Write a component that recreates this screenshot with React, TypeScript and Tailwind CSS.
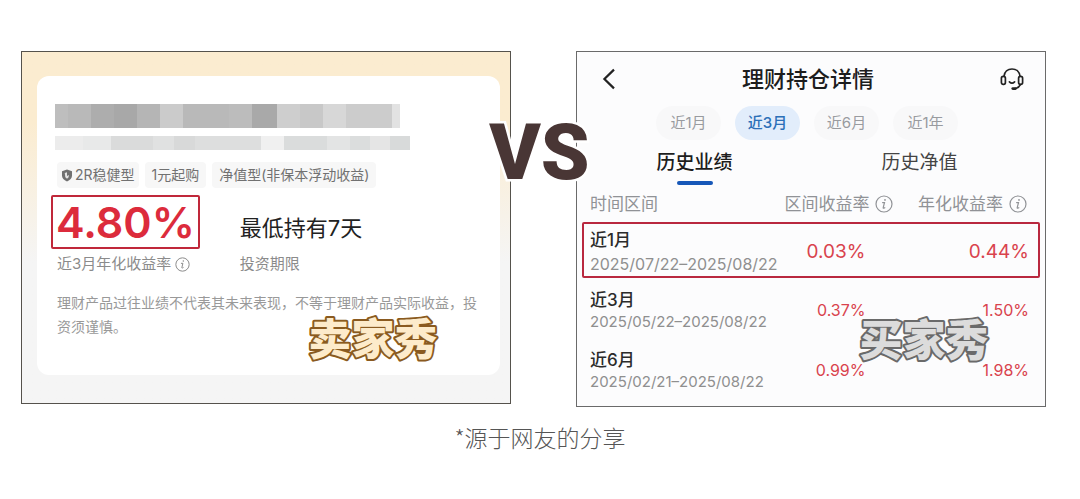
import clsx from 'clsx';

type IconProps = { className?: string };

const InfoIcon = ({ className }: IconProps) => (
  <svg viewBox="0 0 18 18" fill="none" stroke="currentColor" className={className} aria-hidden="true">
    <circle cx="9" cy="9" r="8" strokeWidth="1.2" />
    <path d="M7.6 7.6h1.9l-1.3 5.1q-.1.7.6.5l1-.5" strokeWidth="1.2" strokeLinecap="round" />
    <circle cx="10" cy="4.9" r="0.9" fill="currentColor" stroke="none" />
  </svg>
);

const ShieldIcon = ({ className }: IconProps) => (
  <svg viewBox="0 0 12 14" className={className} aria-hidden="true">
    <path d="M6 0.6 11.4 2.4V7.4Q11.2 11.4 6 13.4 0.8 11.4 0.6 7.4V2.4Z" fill="currentColor" />
    <path d="M3.6 4.2 6 3.4V7.6L8.2 6.4 7.6 9.2 6 10.4 4.2 9Z" fill="#e4e4e4" />
  </svg>
);

const BackIcon = ({ className }: IconProps) => (
  <svg viewBox="0 0 14 22" fill="none" stroke="currentColor" strokeWidth="2.2" className={className} aria-hidden="true">
    <path d="M12 1.6 2.4 11 12 20.4" />
  </svg>
);

const HeadsetIcon = ({ className }: IconProps) => (
  <svg viewBox="0 0 24 24" fill="none" stroke="currentColor" strokeWidth="1.7" strokeLinecap="round" className={className} aria-hidden="true">
    <path d="M4 9.4C4.4 4.8 7.8 2 12 2s7.6 2.8 8 7.4" />
    <rect x="1.4" y="9.4" width="4" height="8" rx="1.8" />
    <rect x="18.6" y="9.4" width="4" height="8" rx="1.8" />
    <path d="M9.4 14.8q2.6 2.6 5.2 0" />
    <path d="M20.4 17.6q-1.6 3.4-5.4 4" />
    <path d="M12.8 21.6h2.6" strokeWidth="2.8" />
  </svg>
);

const Sticker = ({ text, className }: { text: string; className: string }) => (
  <svg viewBox="0 0 136 72" className={clsx('absolute h-[72px] w-[136px]', className)} role="img" aria-label={text}>
    <text
      x="68"
      y="52"
      textAnchor="middle"
      strokeWidth="4"
      strokeLinejoin="round"
      className="font-['Noto_Sans_CJK_SC',sans-serif] text-[43px] font-black [paint-order:stroke_fill]"
    >
      {text}
    </text>
  </svg>
);

const nameBlocks = [
  'grow-[13] bg-[#bebebe]',
  'grow-[23] bg-[#b9b9b9]',
  'grow-[23] bg-[#adadad]',
  'grow-[23] bg-[#a8a8a8]',
  'grow-[23] bg-[#b5b5b5]',
  'grow-[23] bg-[#cbcbcb]',
  'grow-[46] bg-[#b9b9b9]',
  'grow-[23] bg-[#bcbcbc]',
  'grow-[25] bg-[#a9a9a9]',
  'grow-[23] bg-[#cecece]',
  'grow-[23] bg-[#c8c8c8]',
  'grow-[23] bg-[#d7d7d7]',
  'grow-[46] bg-[#cccccc]',
  'grow-[8] bg-[#e2e2e2]',
];

const descBlocks = [
  'grow-[28] bg-[#ececec]',
  'grow-[28] bg-[#e8e9e9]',
  'grow-[42] bg-[#dadbdb]',
  'grow-[21] bg-[#e0e1e1]',
  'grow-[21] bg-[#d8d9d9]',
  'grow-[66] bg-[#dddede]',
  'grow-[23] bg-[#f0f0f0]',
  'grow-[43] bg-[#dadcdc]',
  'grow-[23] bg-[#e3e4e4]',
  'grow-[20] bg-[#dbdddd]',
  'grow-[20] bg-[#e5e5e5]',
  'grow-[20] bg-[#d8dada]',
];

const periods = ['近1月', '近3月', '近6月', '近1年'];

const rows = [
  { label: '近1月', range: '2025/07/22–2025/08/22', gain: '0.03%', annual: '0.44%', marked: true },
  { label: '近3月', range: '2025/05/22–2025/08/22', gain: '0.37%', annual: '1.50%', marked: false },
  { label: '近6月', range: '2025/02/21–2025/08/22', gain: '0.99%', annual: '1.98%', marked: false },
];

const SellerCard = () => (
  <section className="relative self-start border border-[#55524c] bg-linear-to-b from-[#fbecd0] from-20% to-[#f5f5f5] to-60% pt-6 pr-[10px] pb-7 pl-[15px]">
    <div className="rounded-xl bg-white px-4 pt-7 pb-9">
      <div className="ml-[2px] flex h-6 w-4/5 max-w-[346px]">
        {nameBlocks.map((block, i) => (
          <span key={i} className={block} />
        ))}
      </div>
      <div className="mt-2 ml-[2px] flex h-[14px] w-5/6 max-w-[355px]">
        {descBlocks.map((block, i) => (
          <span key={i} className={block} />
        ))}
      </div>

      <div className="pl-1">
        <ul className="mt-3 flex gap-[6px] text-sm leading-[26px] whitespace-nowrap text-[#717171]">
          <li className="flex items-center gap-[2px] rounded-sm bg-[#f7f7f7] px-1">
            <ShieldIcon className="h-[13px] w-3" />
            2R稳健型
          </li>
          <li className="rounded-sm bg-[#f7f7f7] px-[7px]">1元起购</li>
          <li className="rounded-sm bg-[#f7f7f7] px-[7px]">净值型(非保本浮动收益)</li>
        </ul>

        <dl className="mt-[7px] flex gap-10">
          <div className="flex flex-col-reverse">
            <dt className="flex items-center gap-1 text-[15px] leading-[30px] text-[#8b8b8b]">
              近3月年化收益率
              <InfoIcon className="size-[15px]" />
            </dt>
            <dd className="-ml-[6px] flex h-[54px] items-center self-start rounded-xs border-2 border-[#c0283a] px-[3px] text-[43px] font-semibold text-[#dc2b3c]">
              4.80%
            </dd>
          </div>
          <div className="flex flex-col-reverse">
            <dt className="text-[15px] leading-[30px] text-[#8b8b8b]">投资期限</dt>
            <dd className="flex h-[54px] items-center pt-3 text-[22px] text-[#222]">最低持有7天</dd>
          </div>
        </dl>

        <p className="mt-3 text-sm leading-6 text-[#999]">
          理财产品过往业绩不代表其未来表现，不等于理财产品实际收益，投资须谨慎。
        </p>
      </div>
    </div>
    <Sticker text="卖家秀" className="right-[69px] bottom-[28px] fill-[#fdebcb] stroke-[#8a5a20]" />
  </section>
);

const BuyerCard = () => (
  <section className="relative self-start border border-[#6a6a6a] bg-[#fcfcfd] px-[5px] pt-3 pb-2">
    <header className="flex items-center justify-between pr-4 pl-5">
      <button type="button" aria-label="返回" className="text-[#222]">
        <BackIcon className="h-[22px] w-[14px]" />
      </button>
      <h1 className="text-[22px] leading-[30px] font-medium text-[#1d1d1d]">理财持仓详情</h1>
      <button type="button" aria-label="客服" className="text-[#222]">
        <HeadsetIcon className="size-6" />
      </button>
    </header>

    <div className="mt-3 flex justify-center gap-[14px] pr-2 text-[15px] text-[#999b9f]">
      {periods.map((period) => (
        <button
          key={period}
          type="button"
          className={clsx(
            'h-[34px] w-[65px] rounded-full',
            period === '近3月' ? 'bg-[#e2edfb] font-medium text-[#2c70b8]' : 'bg-[#f8f8f9]',
          )}
        >
          {period}
        </button>
      ))}
    </div>

    <div className="mt-2 grid grid-cols-2 pr-2 text-[19px] leading-[30px]">
      <button type="button" className="flex flex-col items-center font-medium text-[#1d1d1d]">
        历史业绩
        <span className="mt-[3px] h-1 w-9 rounded-full bg-[#1657b8]" />
      </button>
      <button type="button" className="flex flex-col items-center text-[#444]">
        历史净值
      </button>
    </div>

    <table className="w-full border-collapse text-left">
      <thead className="text-[17px] leading-[30px] text-[#909296]">
        <tr className="h-[37px]">
          <th className="pl-2 font-normal">时间区间</th>
          <th className="font-normal">
            <span className="flex items-center justify-end gap-[6px]">
              区间收益率
              <InfoIcon className="size-[18px]" />
            </span>
          </th>
          <th className="w-[32%] pr-[13px] font-normal">
            <span className="flex items-center justify-end gap-[6px]">
              年化收益率
              <InfoIcon className="size-[18px]" />
            </span>
          </th>
        </tr>
      </thead>
      <tbody>
        {rows.map((row) => (
          <tr
            key={row.range}
            className={clsx(
              'text-[#d9434d]',
              row.marked
                ? 'h-14 rounded-xs text-[19px] outline-2 -outline-offset-2 outline-[#b9283f]'
                : 'h-[60px] text-base',
            )}
          >
            <th className="pt-1 pl-2 text-left font-normal">
              <span className="block text-[17px] leading-6 font-medium text-[#2b2b2b]">{row.label}</span>
              <span
                className={clsx('block text-[#8f8f8f]', row.marked ? 'text-base leading-6' : 'text-[15px] leading-5')}
              >
                {row.range}
              </span>
            </th>
            <td className="pt-1 pr-7 text-right">{row.gain}</td>
            <td className="pt-1 pr-[11px] text-right">{row.annual}</td>
          </tr>
        ))}
      </tbody>
    </table>
    <Sticker text="买家秀" className="right-[53px] bottom-[30px] fill-[#dcdcdc] stroke-[#6a6a6a]" />
  </section>
);

export default function App() {
  return (
    <main className="min-h-screen bg-white pt-[51px] font-[Inter,'Noto_Sans_CJK_SC',sans-serif]">
      <div className="grid grid-cols-[49fr_65px_47fr] pr-[34px] pl-[21px]">
        <SellerCard />
        <div className="z-10 flex justify-center self-start pt-[62px] pr-2">
          <strong className="font-[Roboto,sans-serif] text-[78px] leading-[80px] font-black text-[#493635] [-webkit-text-stroke:5px_#fff] [paint-order:stroke_fill]">
            VS
          </strong>
        </div>
        <BuyerCard />
      </div>
      <p className="mt-[14px] text-center font-['Noto_Sans_CJK_SC',sans-serif] text-[23px] leading-8 font-light text-[#555]">
        *源于网友的分享
      </p>
    </main>
  );
}
